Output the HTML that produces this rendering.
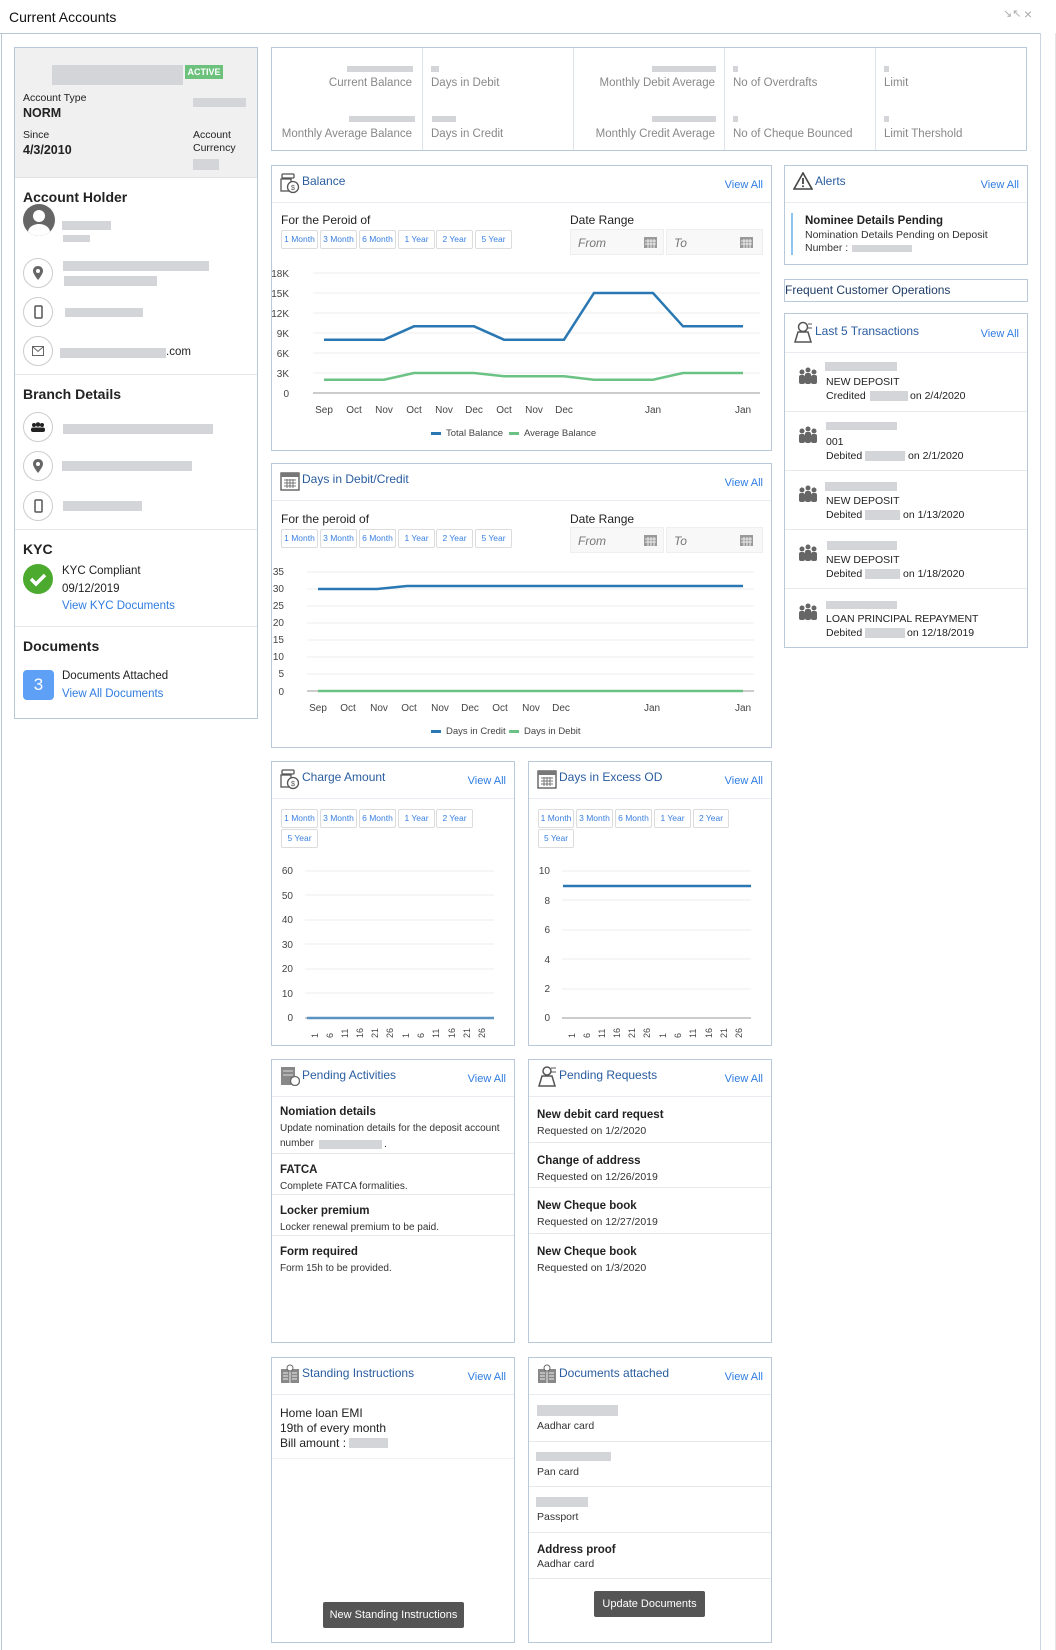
<!DOCTYPE html>
<html><head><meta charset="utf-8"><style>
*{box-sizing:border-box;margin:0;padding:0}
body{width:1056px;height:1650px;position:relative;background:#fff;font-family:"Liberation Sans",sans-serif;color:#222;overflow:hidden}
.a{position:absolute;white-space:nowrap}
.box{position:absolute;border:1px solid #b9c9da;background:#fff}
.bar{position:absolute;background:#d3d5d8}
.hd{position:absolute;left:0;right:0;top:0;height:37px;border-bottom:1px solid #e8ecf0}
.tt{position:absolute;left:30px;top:9px;font-size:12px;color:#2a5d9f}
.va{position:absolute;right:8px;top:13px;font-size:11px;color:#2f7de1}
.ic{position:absolute;left:8px;top:6px}
.btn{position:absolute;height:19px;border:1px solid #dcdcdc;border-radius:2px;font-size:8.5px;color:#3a80e0;text-align:center;line-height:17px;background:#fff}
.lbl{font-size:11.5px;color:#888}
.circ{position:absolute;width:30px;height:30px;border:1px solid #ccc;border-radius:50%;display:flex;align-items:center;justify-content:center}
.h{font-size:14px;font-weight:bold;color:#222}
.t12{font-size:11.5px}
.t11{font-size:10.5px}
.dv{position:absolute;left:0;right:0;height:1px;background:#e6e9ec}
.inp{position:absolute;height:26px;background:#f8f8f8;border:1px solid #eee;font-size:12px;font-style:italic;color:#777;padding:6px 0 0 7px}
.dk{position:absolute;background:#555;color:#fff;font-size:11px;text-align:center;border-radius:2px}
.b12{font-size:11.5px;font-weight:bold}
</style></head><body>

<div class="a" style="left:9px;top:9px;font-size:14px;color:#111">Current Accounts</div>
<div class="a" style="left:1003px;top:7px;font-size:11px;color:#aaa">&#8600;&#8598;</div>
<div class="a" style="left:1024px;top:6px;font-size:14px;color:#aaa">&#215;</div>
<div style="position:absolute;left:0;top:33px;width:1041px;height:1px;background:#b8c7d6"></div>
<div style="position:absolute;left:1px;top:33px;width:1px;height:1617px;background:#b8c7d6"></div>
<div style="position:absolute;left:1040px;top:33px;width:1px;height:1617px;background:#c9d6e2"></div>
<div style="position:absolute;left:1055px;top:33px;width:1px;height:1617px;background:#e5e5e5"></div>

<!-- left card -->
<div class="box" style="left:14px;top:47px;width:244px;height:672px">
 <div style="position:absolute;left:0;top:0;right:0;height:130px;background:#f0f0f0;border-bottom:1px solid #e2e2e2"></div>
 <div class="bar" style="left:37px;top:17px;width:131px;height:20px"></div>
 <div class="a" style="left:170px;top:17px;width:38px;height:14px;background:#6cc17d;color:#fff;font-size:9px;font-weight:bold;text-align:center;line-height:14px">ACTIVE</div>
 <div class="a t11" style="left:8px;top:44px">Account Type</div>
 <div class="a" style="left:8px;top:58px;font-size:12.5px;font-weight:bold">NORM</div>
 <div class="bar" style="left:178px;top:50px;width:53px;height:9px"></div>
 <div class="a t11" style="left:8px;top:81px">Since</div>
 <div class="a" style="left:8px;top:95px;font-size:12.5px;font-weight:bold">4/3/2010</div>
 <div class="a t11" style="left:178px;top:81px;line-height:13px">Account<br>Currency</div>
 <div class="bar" style="left:178px;top:111px;width:26px;height:11px"></div>

 <div class="a h" style="left:8px;top:141px">Account Holder</div>
 <div class="a" style="left:8px;top:156px;width:32px;height:32px;border-radius:50%;background:#666;overflow:hidden">
  <div style="position:absolute;left:10px;top:6px;width:12px;height:12px;border-radius:50%;background:#fff"></div>
  <div style="position:absolute;left:5px;top:20px;width:22px;height:16px;border-radius:50%;background:#fff"></div>
 </div>
 <div class="bar" style="left:47px;top:173px;width:49px;height:9px"></div>
 <div class="bar" style="left:48px;top:187px;width:27px;height:7px"></div>

 <div class="circ" style="left:8px;top:210px"><svg width="10" height="14" viewBox="0 0 10 14"><path d="M5 0C2 0 0 2 0 5c0 3 5 9 5 9s5-6 5-9c0-3-2-5-5-5z" fill="#666"/><circle cx="5" cy="5" r="2" fill="#fff"/></svg></div>
 <div class="bar" style="left:48px;top:213px;width:146px;height:10px"></div>
 <div class="bar" style="left:49px;top:228px;width:93px;height:10px"></div>
 <div class="circ" style="left:8px;top:249px"><svg width="9" height="14"><rect x="1" y="1" width="7" height="12" rx="1" fill="none" stroke="#555" stroke-width="1.5"/></svg></div>
 <div class="bar" style="left:50px;top:260px;width:78px;height:9px"></div>
 <div class="circ" style="left:8px;top:288px"><svg width="12" height="10"><rect x="0.5" y="0.5" width="11" height="9" fill="none" stroke="#666"/><path d="M0.5 0.5l5.5 5 5.5-5" fill="none" stroke="#666"/></svg></div>
 <div class="bar" style="left:45px;top:300px;width:106px;height:10px"></div>
 <div class="a t12" style="left:151px;top:298px">.com</div>
 <div class="dv" style="top:326px"></div>

 <div class="a h" style="left:8px;top:338px">Branch Details</div>
 <div class="circ" style="left:8px;top:364px"><svg width="14" height="10"><circle cx="3" cy="3" r="2" fill="#222"/><circle cx="7" cy="2.5" r="2.3" fill="#222"/><circle cx="11" cy="3" r="2" fill="#222"/><rect x="0" y="5.5" width="14" height="4.5" rx="2" fill="#222"/></svg></div>
 <div class="bar" style="left:48px;top:376px;width:150px;height:10px"></div>
 <div class="circ" style="left:8px;top:403px"><svg width="10" height="14" viewBox="0 0 10 14"><path d="M5 0C2 0 0 2 0 5c0 3 5 9 5 9s5-6 5-9c0-3-2-5-5-5z" fill="#666"/><circle cx="5" cy="5" r="2" fill="#fff"/></svg></div>
 <div class="bar" style="left:47px;top:413px;width:130px;height:10px"></div>
 <div class="circ" style="left:8px;top:443px"><svg width="9" height="14"><rect x="1" y="1" width="7" height="12" rx="1" fill="none" stroke="#555" stroke-width="1.5"/></svg></div>
 <div class="bar" style="left:48px;top:453px;width:79px;height:10px"></div>
 <div class="dv" style="top:481px"></div>

 <div class="a h" style="left:8px;top:493px">KYC</div>
 <div class="a" style="left:8px;top:516px;width:30px;height:30px;border-radius:50%;background:#4caa2f"><svg width="30" height="30"><path d="M8 15l5 5 9-9" fill="none" stroke="#fff" stroke-width="3.5"/></svg></div>
 <div class="a t12" style="left:47px;top:517px">KYC Compliant</div>
 <div class="a t12" style="left:47px;top:535px">09/12/2019</div>
 <div class="a t12" style="left:47px;top:552px;color:#2f7de1">View KYC Documents</div>
 <div class="dv" style="top:578px"></div>

 <div class="a h" style="left:8px;top:590px">Documents</div>
 <div class="a" style="left:8px;top:622px;width:31px;height:30px;border-radius:4px;background:#5fa0f7;color:#fff;font-size:17px;text-align:center;line-height:30px">3</div>
 <div class="a t12" style="left:47px;top:622px">Documents Attached</div>
 <div class="a t12" style="left:47px;top:640px;color:#2f7de1">View All Documents</div>
</div>

<!-- summary -->
<div class="box" style="left:271px;top:47px;width:756px;height:104px">
 <div style="position:absolute;left:150px;top:0;width:1px;height:102px;background:#dde3ea"></div>
 <div style="position:absolute;left:301px;top:0;width:1px;height:102px;background:#dde3ea"></div>
 <div style="position:absolute;left:452px;top:0;width:1px;height:102px;background:#dde3ea"></div>
 <div style="position:absolute;left:603px;top:0;width:1px;height:102px;background:#dde3ea"></div>
 <div class="bar" style="left:75px;top:18px;width:66px;height:6px"></div>
 <div class="a lbl" style="right:614px;top:29px">Current Balance</div>
 <div class="bar" style="left:77px;top:68px;width:66px;height:6px"></div>
 <div class="a lbl" style="right:614px;top:80px">Monthly Average Balance</div>
 <div class="bar" style="left:159px;top:18px;width:8px;height:6px"></div>
 <div class="a lbl" style="left:159px;top:29px">Days in Debit</div>
 <div class="bar" style="left:160px;top:68px;width:24px;height:6px"></div>
 <div class="a lbl" style="left:159px;top:80px">Days in Credit</div>
 <div class="bar" style="left:380px;top:18px;width:64px;height:6px"></div>
 <div class="a lbl" style="right:311px;top:29px">Monthly Debit Average</div>
 <div class="bar" style="left:380px;top:68px;width:64px;height:6px"></div>
 <div class="a lbl" style="right:311px;top:80px">Monthly Credit Average</div>
 <div class="bar" style="left:461px;top:18px;width:5px;height:6px"></div>
 <div class="a lbl" style="left:461px;top:29px">No of Overdrafts</div>
 <div class="bar" style="left:461px;top:68px;width:5px;height:6px"></div>
 <div class="a lbl" style="left:461px;top:80px">No of Cheque Bounced</div>
 <div class="bar" style="left:612px;top:18px;width:5px;height:6px"></div>
 <div class="a lbl" style="left:612px;top:29px">Limit</div>
 <div class="bar" style="left:612px;top:68px;width:5px;height:6px"></div>
 <div class="a lbl" style="left:612px;top:80px">Limit Thershold</div>
</div>

<!-- Balance -->
<div class="box" style="left:271px;top:165px;width:501px;height:286px">
 <div class="hd"></div>
 <svg class="ic" width="20" height="22" viewBox="0 0 20 22"><rect x="2" y="2" width="12" height="4" rx="1" fill="none" stroke="#555" stroke-width="1.3"/><rect x="1" y="7" width="10" height="12" fill="none" stroke="#555" stroke-width="1.3"/><circle cx="13" cy="15" r="5.5" fill="#fff" stroke="#555" stroke-width="1.3"/><text x="11" y="18" font-size="7" fill="#555">$</text></svg>
 <div class="tt" style="top:8px">Balance</div>
 <div class="va">View All</div>
 <div class="a" style="left:9px;top:47px;font-size:12px">For the Peroid of</div>
 <div class="btn" style="left:9px;top:64px;width:37px">1 Month</div>
 <div class="btn" style="left:48px;top:64px;width:37px">3 Month</div>
 <div class="btn" style="left:87px;top:64px;width:37px">6 Month</div>
 <div class="btn" style="left:126px;top:64px;width:37px">1 Year</div>
 <div class="btn" style="left:164px;top:64px;width:37px">2 Year</div>
 <div class="btn" style="left:203px;top:64px;width:37px">5 Year</div>
 <div class="a" style="left:298px;top:47px;font-size:12px">Date Range</div>
 <div class="inp" style="left:298px;top:63px;width:94px">From</div>
 <div class="inp" style="left:394px;top:63px;width:97px">To</div>
 <svg class="a" style="left:372px;top:70px" width="13" height="12"><rect x="0" y="1" width="13" height="11" fill="#999"/><path d="M1 5h11M1 8h11M4 3v9M7 3v9M10 3v9" stroke="#eee"/></svg>
 <svg class="a" style="left:468px;top:70px" width="13" height="12"><rect x="0" y="1" width="13" height="11" fill="#999"/><path d="M1 5h11M1 8h11M4 3v9M7 3v9M10 3v9" stroke="#eee"/></svg>
</div>
<svg class="a" style="left:271px;top:250px" width="500" height="200" font-family="Liberation Sans" font-size="10" fill="#444">
 <g stroke="#ebedf0"><path d="M42 23H489M42 43H489M42 63H489M42 83H489M42 103H489M42 123H489"/></g>
 <path d="M42 143H489" stroke="#999"/>
 <g text-anchor="end"><text x="18" y="27">18K</text><text x="18" y="47">15K</text><text x="18" y="67">12K</text><text x="18" y="87">9K</text><text x="18" y="107">6K</text><text x="18" y="127">3K</text><text x="18" y="147">0</text></g>
 <polyline fill="none" stroke="#2a78b3" stroke-width="2.5" points="53,89.7 113,89.7 143,76.3 203,76.3 233,89.7 293,89.7 323,43 382,43 412,76.3 472,76.3"/>
 <polyline fill="none" stroke="#6bc285" stroke-width="2.5" points="53,129.7 113,129.7 143,123 203,123 233,126.3 293,126.3 323,129.7 382,129.7 412,123 472,123"/>
 <g text-anchor="middle"><text x="53" y="163">Sep</text><text x="83" y="163">Oct</text><text x="113" y="163">Nov</text><text x="143" y="163">Oct</text><text x="173" y="163">Nov</text><text x="203" y="163">Dec</text><text x="233" y="163">Oct</text><text x="263" y="163">Nov</text><text x="293" y="163">Dec</text><text x="382" y="163">Jan</text><text x="472" y="163">Jan</text></g>
 <rect x="160" y="182" width="10" height="3" fill="#2a78b3"/><text x="175" y="186" font-size="9.5">Total Balance</text>
 <rect x="238" y="182" width="10" height="3" fill="#6bc285"/><text x="253" y="186" font-size="9.5">Average Balance</text>
</svg>

<!-- Days Debit/Credit -->
<div class="box" style="left:271px;top:463px;width:501px;height:285px">
 <div class="hd"></div>
 <svg class="ic" width="20" height="21" viewBox="0 0 20 21"><rect x="1" y="3" width="18" height="17" fill="none" stroke="#555" stroke-width="1.3"/><rect x="1" y="3" width="18" height="4" fill="#777"/><path d="M4 10h12M4 13h12M4 16h12M7 9v9M10 9v9M13 9v9" stroke="#777"/></svg>
 <div class="tt" style="top:8px">Days in Debit/Credit</div>
 <div class="va">View All</div>
 <div class="a" style="left:9px;top:48px;font-size:12px">For the peroid of</div>
 <div class="btn" style="left:9px;top:65px;width:37px">1 Month</div>
 <div class="btn" style="left:48px;top:65px;width:37px">3 Month</div>
 <div class="btn" style="left:87px;top:65px;width:37px">6 Month</div>
 <div class="btn" style="left:126px;top:65px;width:37px">1 Year</div>
 <div class="btn" style="left:164px;top:65px;width:37px">2 Year</div>
 <div class="btn" style="left:203px;top:65px;width:37px">5 Year</div>
 <div class="a" style="left:298px;top:48px;font-size:12px">Date Range</div>
 <div class="inp" style="left:298px;top:63px;width:94px">From</div>
 <div class="inp" style="left:394px;top:63px;width:97px">To</div>
 <svg class="a" style="left:372px;top:70px" width="13" height="12"><rect x="0" y="1" width="13" height="11" fill="#999"/><path d="M1 5h11M1 8h11M4 3v9M7 3v9M10 3v9" stroke="#eee"/></svg>
 <svg class="a" style="left:468px;top:70px" width="13" height="12"><rect x="0" y="1" width="13" height="11" fill="#999"/><path d="M1 5h11M1 8h11M4 3v9M7 3v9M10 3v9" stroke="#eee"/></svg>
</div>
<svg class="a" style="left:271px;top:560px" width="500" height="190" font-family="Liberation Sans" font-size="10" fill="#444">
 <g stroke="#ebedf0"><path d="M36 12H483M36 29H483M36 46H483M36 63H483M36 80H483M36 97H483M36 114H483"/></g>
 <path d="M36 131H483" stroke="#999"/>
 <g text-anchor="end"><text x="13" y="15">35</text><text x="13" y="32">30</text><text x="13" y="49">25</text><text x="13" y="66">20</text><text x="13" y="83">15</text><text x="13" y="100">10</text><text x="13" y="117">5</text><text x="13" y="135">0</text></g>
 <polyline fill="none" stroke="#2a78b3" stroke-width="2.5" points="47,29 106,29 136,26 472,26"/>
 <path d="M47 131H472" stroke="#6bc285" stroke-width="2.5"/>
 <g text-anchor="middle"><text x="47" y="151">Sep</text><text x="77" y="151">Oct</text><text x="108" y="151">Nov</text><text x="138" y="151">Oct</text><text x="169" y="151">Nov</text><text x="199" y="151">Dec</text><text x="229" y="151">Oct</text><text x="260" y="151">Nov</text><text x="290" y="151">Dec</text><text x="381" y="151">Jan</text><text x="472" y="151">Jan</text></g>
 <rect x="160" y="170" width="10" height="3" fill="#2a78b3"/><text x="175" y="174" font-size="9.5">Days in Credit</text>
 <rect x="238" y="170" width="10" height="3" fill="#6bc285"/><text x="253" y="174" font-size="9.5">Days in Debit</text>
</svg>

<!-- Charge Amount -->
<div class="box" style="left:271px;top:761px;width:244px;height:285px">
 <div class="hd"></div>
 <svg class="ic" width="20" height="22" viewBox="0 0 20 22"><rect x="2" y="2" width="12" height="4" rx="1" fill="none" stroke="#555" stroke-width="1.3"/><rect x="1" y="7" width="10" height="12" fill="none" stroke="#555" stroke-width="1.3"/><circle cx="13" cy="15" r="5.5" fill="#fff" stroke="#555" stroke-width="1.3"/><text x="11" y="18" font-size="7" fill="#555">$</text></svg>
 <div class="tt" style="top:8px">Charge Amount</div>
 <div class="va">View All</div>
 <div class="btn" style="left:9px;top:47px;width:37px">1 Month</div>
 <div class="btn" style="left:48px;top:47px;width:37px">3 Month</div>
 <div class="btn" style="left:87px;top:47px;width:37px">6 Month</div>
 <div class="btn" style="left:126px;top:47px;width:37px">1 Year</div>
 <div class="btn" style="left:164px;top:47px;width:37px">2 Year</div>
 <div class="btn" style="left:9px;top:67px;width:37px">5 Year</div>
 <svg class="a" style="left:0;top:100px" width="244" height="185" font-family="Liberation Sans" font-size="10" fill="#444">
  <g stroke="#ebedf0"><path d="M33 9H222M33 33H222M33 58H222M33 82H222M33 107H222M33 131H222"/></g>
  <path d="M33 156H222" stroke="#999"/>
  <g text-anchor="end"><text x="21" y="12">60</text><text x="21" y="37">50</text><text x="21" y="61">40</text><text x="21" y="86">30</text><text x="21" y="110">20</text><text x="21" y="135">10</text><text x="21" y="159">0</text></g>
  <path d="M35 156H222" stroke="#5b93c3" stroke-width="2.5"/>
  <g font-size="9"><text transform="translate(53,176) rotate(-90)" x="0" y="-7">1</text><text transform="translate(53,176) rotate(-90)" x="0" y="8">6</text><text transform="translate(53,176) rotate(-90)" x="0" y="23">11</text><text transform="translate(53,176) rotate(-90)" x="0" y="38">16</text><text transform="translate(53,176) rotate(-90)" x="0" y="53">21</text><text transform="translate(53,176) rotate(-90)" x="0" y="68">26</text><text transform="translate(53,176) rotate(-90)" x="0" y="84">1</text><text transform="translate(53,176) rotate(-90)" x="0" y="99">6</text><text transform="translate(53,176) rotate(-90)" x="0" y="114">11</text><text transform="translate(53,176) rotate(-90)" x="0" y="130">16</text><text transform="translate(53,176) rotate(-90)" x="0" y="145">21</text><text transform="translate(53,176) rotate(-90)" x="0" y="160">26</text></g>
 </svg>
</div>

<!-- Days in Excess OD -->
<div class="box" style="left:528px;top:761px;width:244px;height:285px">
 <div class="hd"></div>
 <svg class="ic" width="20" height="21" viewBox="0 0 20 21"><rect x="1" y="3" width="18" height="17" fill="none" stroke="#555" stroke-width="1.3"/><rect x="1" y="3" width="18" height="4" fill="#777"/><path d="M4 10h12M4 13h12M4 16h12M7 9v9M10 9v9M13 9v9" stroke="#777"/></svg>
 <div class="tt" style="top:8px">Days in Excess OD</div>
 <div class="va">View All</div>
 <div class="btn" style="left:9px;top:47px;width:36px">1 Month</div>
 <div class="btn" style="left:47px;top:47px;width:37px">3 Month</div>
 <div class="btn" style="left:86px;top:47px;width:37px">6 Month</div>
 <div class="btn" style="left:125px;top:47px;width:37px">1 Year</div>
 <div class="btn" style="left:164px;top:47px;width:36px">2 Year</div>
 <div class="btn" style="left:9px;top:67px;width:36px">5 Year</div>
 <svg class="a" style="left:0;top:100px" width="244" height="185" font-family="Liberation Sans" font-size="10" fill="#444">
  <g stroke="#ebedf0"><path d="M33 9H222M33 38H222M33 68H222M33 97H222M33 127H222"/></g>
  <path d="M33 156H222" stroke="#999"/>
  <g text-anchor="end"><text x="21" y="12">10</text><text x="21" y="42">8</text><text x="21" y="71">6</text><text x="21" y="101">4</text><text x="21" y="130">2</text><text x="21" y="159">0</text></g>
  <path d="M34 24H222" stroke="#2a78b3" stroke-width="2.5"/>
  <g font-size="9"><text transform="translate(53,176) rotate(-90)" x="0" y="-7">1</text><text transform="translate(53,176) rotate(-90)" x="0" y="8">6</text><text transform="translate(53,176) rotate(-90)" x="0" y="23">11</text><text transform="translate(53,176) rotate(-90)" x="0" y="38">16</text><text transform="translate(53,176) rotate(-90)" x="0" y="53">21</text><text transform="translate(53,176) rotate(-90)" x="0" y="68">26</text><text transform="translate(53,176) rotate(-90)" x="0" y="84">1</text><text transform="translate(53,176) rotate(-90)" x="0" y="99">6</text><text transform="translate(53,176) rotate(-90)" x="0" y="114">11</text><text transform="translate(53,176) rotate(-90)" x="0" y="130">16</text><text transform="translate(53,176) rotate(-90)" x="0" y="145">21</text><text transform="translate(53,176) rotate(-90)" x="0" y="160">26</text></g>
 </svg>
</div>

<!-- Pending Activities -->
<div class="box" style="left:271px;top:1059px;width:244px;height:284px">
 <div class="hd"></div>
 <svg class="ic" width="20" height="20" viewBox="0 0 20 20"><rect x="1" y="1" width="14" height="18" fill="#888"/><path d="M3 5h10M3 9h10" stroke="#ddd"/><circle cx="15" cy="15" r="4.5" fill="#fff" stroke="#666" stroke-width="1.3"/></svg>
 <div class="tt" style="top:8px">Pending Activities</div>
 <div class="va">View All</div>
 <div class="a b12" style="left:8px;top:46px">Nomiation details</div>
 <div class="a" style="left:8px;top:63px;font-size:10px;color:#333">Update nomination details for the deposit account</div>
 <div class="a" style="left:8px;top:78px;font-size:10px;color:#333">number</div>
 <div class="bar" style="left:47px;top:80px;width:63px;height:9px"></div>
 <div class="a t11" style="left:112px;top:78px">.</div>
 <div class="dv" style="top:93px"></div>
 <div class="a b12" style="left:8px;top:104px">FATCA</div>
 <div class="a" style="left:8px;top:121px;font-size:10px;color:#333">Complete FATCA formalities.</div>
 <div class="dv" style="top:134px"></div>
 <div class="a b12" style="left:8px;top:145px">Locker premium</div>
 <div class="a" style="left:8px;top:162px;font-size:10px;color:#333">Locker renewal premium to be paid.</div>
 <div class="dv" style="top:175px"></div>
 <div class="a b12" style="left:8px;top:186px">Form required</div>
 <div class="a" style="left:8px;top:203px;font-size:10px;color:#333">Form 15h to be provided.</div>
</div>

<!-- Pending Requests -->
<div class="box" style="left:528px;top:1059px;width:244px;height:284px">
 <div class="hd"></div>
 <svg class="ic" width="20" height="21" viewBox="0 0 20 21"><circle cx="10" cy="5" r="4" fill="none" stroke="#555" stroke-width="1.5"/><path d="M2 20l3-10h10l3 10z" fill="none" stroke="#555" stroke-width="1.5"/><path d="M14 2h5M14 6h5" stroke="#555"/></svg>
 <div class="tt" style="top:8px">Pending Requests</div>
 <div class="va">View All</div>
 <div class="a b12" style="left:8px;top:49px">New debit card request</div>
 <div class="a t11" style="left:8px;top:65px;color:#333">Requested on 1/2/2020</div>
 <div class="dv" style="top:82px"></div>
 <div class="a b12" style="left:8px;top:95px">Change of address</div>
 <div class="a t11" style="left:8px;top:111px;color:#333">Requested on 12/26/2019</div>
 <div class="dv" style="top:127px"></div>
 <div class="a b12" style="left:8px;top:140px">New Cheque book</div>
 <div class="a t11" style="left:8px;top:156px;color:#333">Requested on 12/27/2019</div>
 <div class="dv" style="top:173px"></div>
 <div class="a b12" style="left:8px;top:186px">New Cheque book</div>
 <div class="a t11" style="left:8px;top:202px;color:#333">Requested on 1/3/2020</div>
</div>

<!-- Standing Instructions -->
<div class="box" style="left:271px;top:1357px;width:244px;height:286px">
 <div class="hd"></div>
 <svg class="ic" width="20" height="20" viewBox="0 0 20 20"><rect x="1" y="5" width="18" height="14" fill="#888"/><path d="M10 5v14M3 9h5M3 12h5M3 15h5M12 9h5M12 12h5M12 15h5" stroke="#eee"/><circle cx="10" cy="4" r="3" fill="#fff" stroke="#666"/></svg>
 <div class="tt" style="top:8px">Standing Instructions</div>
 <div class="va">View All</div>
 <div class="a" style="left:8px;top:48px;font-size:12px">Home loan EMI</div>
 <div class="a" style="left:8px;top:63px;font-size:12px">19th of every month</div>
 <div class="a" style="left:8px;top:78px;font-size:12px">Bill amount :</div>
 <div class="bar" style="left:77px;top:80px;width:39px;height:10px"></div>
 <div class="dv" style="top:100px;background:#f0f2f4"></div>
 <div class="dk" style="left:51px;top:244px;width:141px;height:26px;line-height:26px">New Standing Instructions</div>
</div>

<!-- Documents attached -->
<div class="box" style="left:528px;top:1357px;width:244px;height:286px">
 <div class="hd"></div>
 <svg class="ic" width="20" height="20" viewBox="0 0 20 20"><rect x="1" y="5" width="18" height="14" fill="#888"/><path d="M10 5v14M3 9h5M3 12h5M3 15h5M12 9h5M12 12h5M12 15h5" stroke="#eee"/><circle cx="10" cy="4" r="3" fill="#fff" stroke="#666"/></svg>
 <div class="tt" style="top:8px">Documents attached</div>
 <div class="va">View All</div>
 <div class="bar" style="left:8px;top:47px;width:81px;height:11px"></div>
 <div class="a t11" style="left:8px;top:62px;color:#333">Aadhar card</div>
 <div class="dv" style="top:83px"></div>
 <div class="bar" style="left:7px;top:94px;width:75px;height:9px"></div>
 <div class="a t11" style="left:8px;top:108px;color:#333">Pan card</div>
 <div class="dv" style="top:128px"></div>
 <div class="bar" style="left:7px;top:139px;width:52px;height:10px"></div>
 <div class="a t11" style="left:8px;top:153px;color:#333">Passport</div>
 <div class="dv" style="top:174px"></div>
 <div class="a b12" style="left:8px;top:186px">Address proof</div>
 <div class="a t11" style="left:8px;top:200px;color:#333">Aadhar card</div>
 <div class="dv" style="top:220px"></div>
 <div class="dk" style="left:65px;top:233px;width:111px;height:26px;line-height:26px">Update Documents</div>
</div>

<!-- Alerts -->
<div class="box" style="left:784px;top:165px;width:244px;height:100px">
 <div class="hd"></div>
 <svg class="ic" width="20" height="18" viewBox="0 0 20 18"><path d="M10 1L1 17h18z" fill="none" stroke="#444" stroke-width="1.6"/><path d="M10 6v6" stroke="#444" stroke-width="1.8"/><circle cx="10" cy="14.3" r="1" fill="#444"/></svg>
 <div class="tt" style="top:8px">Alerts</div>
 <div class="va">View All</div>
 <div class="a" style="left:6px;top:47px;width:2px;height:42px;background:#8ec5f0"></div>
 <div class="a b12" style="left:20px;top:49px">Nominee Details Pending</div>
 <div class="a t11" style="left:20px;top:63px;color:#333">Nomination Details Pending on Deposit</div>
 <div class="a t11" style="left:20px;top:76px;color:#333">Number :</div>
 <div class="bar" style="left:67px;top:79px;width:60px;height:7px"></div>
</div>

<div class="box" style="left:784px;top:279px;width:244px;height:23px">
 <div class="a" style="left:0;top:3px;font-size:12px;color:#1f3c66">Frequent Customer Operations</div>
</div>

<!-- Last 5 -->
<div class="box" style="left:784px;top:313px;width:244px;height:335px">
 <div class="hd" style="height:39px"></div>
 <svg class="ic" style="top:7px" width="20" height="22" viewBox="0 0 20 22"><circle cx="10" cy="6" r="4.5" fill="none" stroke="#555" stroke-width="1.5"/><path d="M2 21l3-10h10l3 10z" fill="none" stroke="#555" stroke-width="1.5"/><path d="M15 3h4M15 7h4" stroke="#555"/></svg>
 <div class="tt" style="top:10px">Last 5 Transactions</div>
 <div class="va" style="top:14px">View All</div>
</div>

<!-- item 1 -->
<div class="a" style="left:798px;top:367px"><svg width="20" height="18"><g fill="#666"><circle cx="4" cy="5" r="2.5"/><circle cx="10" cy="3" r="2.5"/><circle cx="16" cy="5" r="2.5"/><rect x="1" y="8" width="6" height="9" rx="2"/><rect x="7" y="6" width="6" height="11" rx="2"/><rect x="13" y="8" width="6" height="9" rx="2"/></g></svg></div>
<div class="bar" style="left:825px;top:362px;width:72px;height:9px"></div>
<div class="a t11" style="left:826px;top:376px">NEW DEPOSIT</div>
<div class="a t11" style="left:826px;top:390px">Credited</div>
<div class="bar" style="left:870px;top:391px;width:38px;height:10px"></div>
<div class="a t11" style="left:910px;top:390px">on 2/4/2020</div>
<div style="position:absolute;left:785px;top:411px;width:242px;height:1px;background:#e6e9ec"></div>
<!-- item 2 -->
<div class="a" style="left:798px;top:426px"><svg width="20" height="18"><g fill="#666"><circle cx="4" cy="5" r="2.5"/><circle cx="10" cy="3" r="2.5"/><circle cx="16" cy="5" r="2.5"/><rect x="1" y="8" width="6" height="9" rx="2"/><rect x="7" y="6" width="6" height="11" rx="2"/><rect x="13" y="8" width="6" height="9" rx="2"/></g></svg></div>
<div class="bar" style="left:826px;top:422px;width:71px;height:8px"></div>
<div class="a t11" style="left:826px;top:436px">001</div>
<div class="a t11" style="left:826px;top:450px">Debited</div>
<div class="bar" style="left:865px;top:451px;width:40px;height:10px"></div>
<div class="a t11" style="left:908px;top:450px">on 2/1/2020</div>
<div style="position:absolute;left:785px;top:470px;width:242px;height:1px;background:#e6e9ec"></div>
<!-- item 3 -->
<div class="a" style="left:798px;top:485px"><svg width="20" height="18"><g fill="#666"><circle cx="4" cy="5" r="2.5"/><circle cx="10" cy="3" r="2.5"/><circle cx="16" cy="5" r="2.5"/><rect x="1" y="8" width="6" height="9" rx="2"/><rect x="7" y="6" width="6" height="11" rx="2"/><rect x="13" y="8" width="6" height="9" rx="2"/></g></svg></div>
<div class="bar" style="left:825px;top:482px;width:72px;height:9px"></div>
<div class="a t11" style="left:826px;top:495px">NEW DEPOSIT</div>
<div class="a t11" style="left:826px;top:509px">Debited</div>
<div class="bar" style="left:865px;top:510px;width:35px;height:10px"></div>
<div class="a t11" style="left:903px;top:509px">on 1/13/2020</div>
<div style="position:absolute;left:785px;top:529px;width:242px;height:1px;background:#e6e9ec"></div>
<!-- item 4 -->
<div class="a" style="left:798px;top:544px"><svg width="20" height="18"><g fill="#666"><circle cx="4" cy="5" r="2.5"/><circle cx="10" cy="3" r="2.5"/><circle cx="16" cy="5" r="2.5"/><rect x="1" y="8" width="6" height="9" rx="2"/><rect x="7" y="6" width="6" height="11" rx="2"/><rect x="13" y="8" width="6" height="9" rx="2"/></g></svg></div>
<div class="bar" style="left:827px;top:541px;width:70px;height:9px"></div>
<div class="a t11" style="left:826px;top:554px">NEW DEPOSIT</div>
<div class="a t11" style="left:826px;top:568px">Debited</div>
<div class="bar" style="left:865px;top:569px;width:35px;height:10px"></div>
<div class="a t11" style="left:903px;top:568px">on 1/18/2020</div>
<div style="position:absolute;left:785px;top:588px;width:242px;height:1px;background:#e6e9ec"></div>
<!-- item 5 -->
<div class="a" style="left:798px;top:603px"><svg width="20" height="18"><g fill="#666"><circle cx="4" cy="5" r="2.5"/><circle cx="10" cy="3" r="2.5"/><circle cx="16" cy="5" r="2.5"/><rect x="1" y="8" width="6" height="9" rx="2"/><rect x="7" y="6" width="6" height="11" rx="2"/><rect x="13" y="8" width="6" height="9" rx="2"/></g></svg></div>
<div class="bar" style="left:826px;top:601px;width:71px;height:8px"></div>
<div class="a t11" style="left:826px;top:613px">LOAN PRINCIPAL REPAYMENT</div>
<div class="a t11" style="left:826px;top:627px">Debited</div>
<div class="bar" style="left:865px;top:628px;width:40px;height:10px"></div>
<div class="a t11" style="left:907px;top:627px">on 12/18/2019</div>
</body></html>
